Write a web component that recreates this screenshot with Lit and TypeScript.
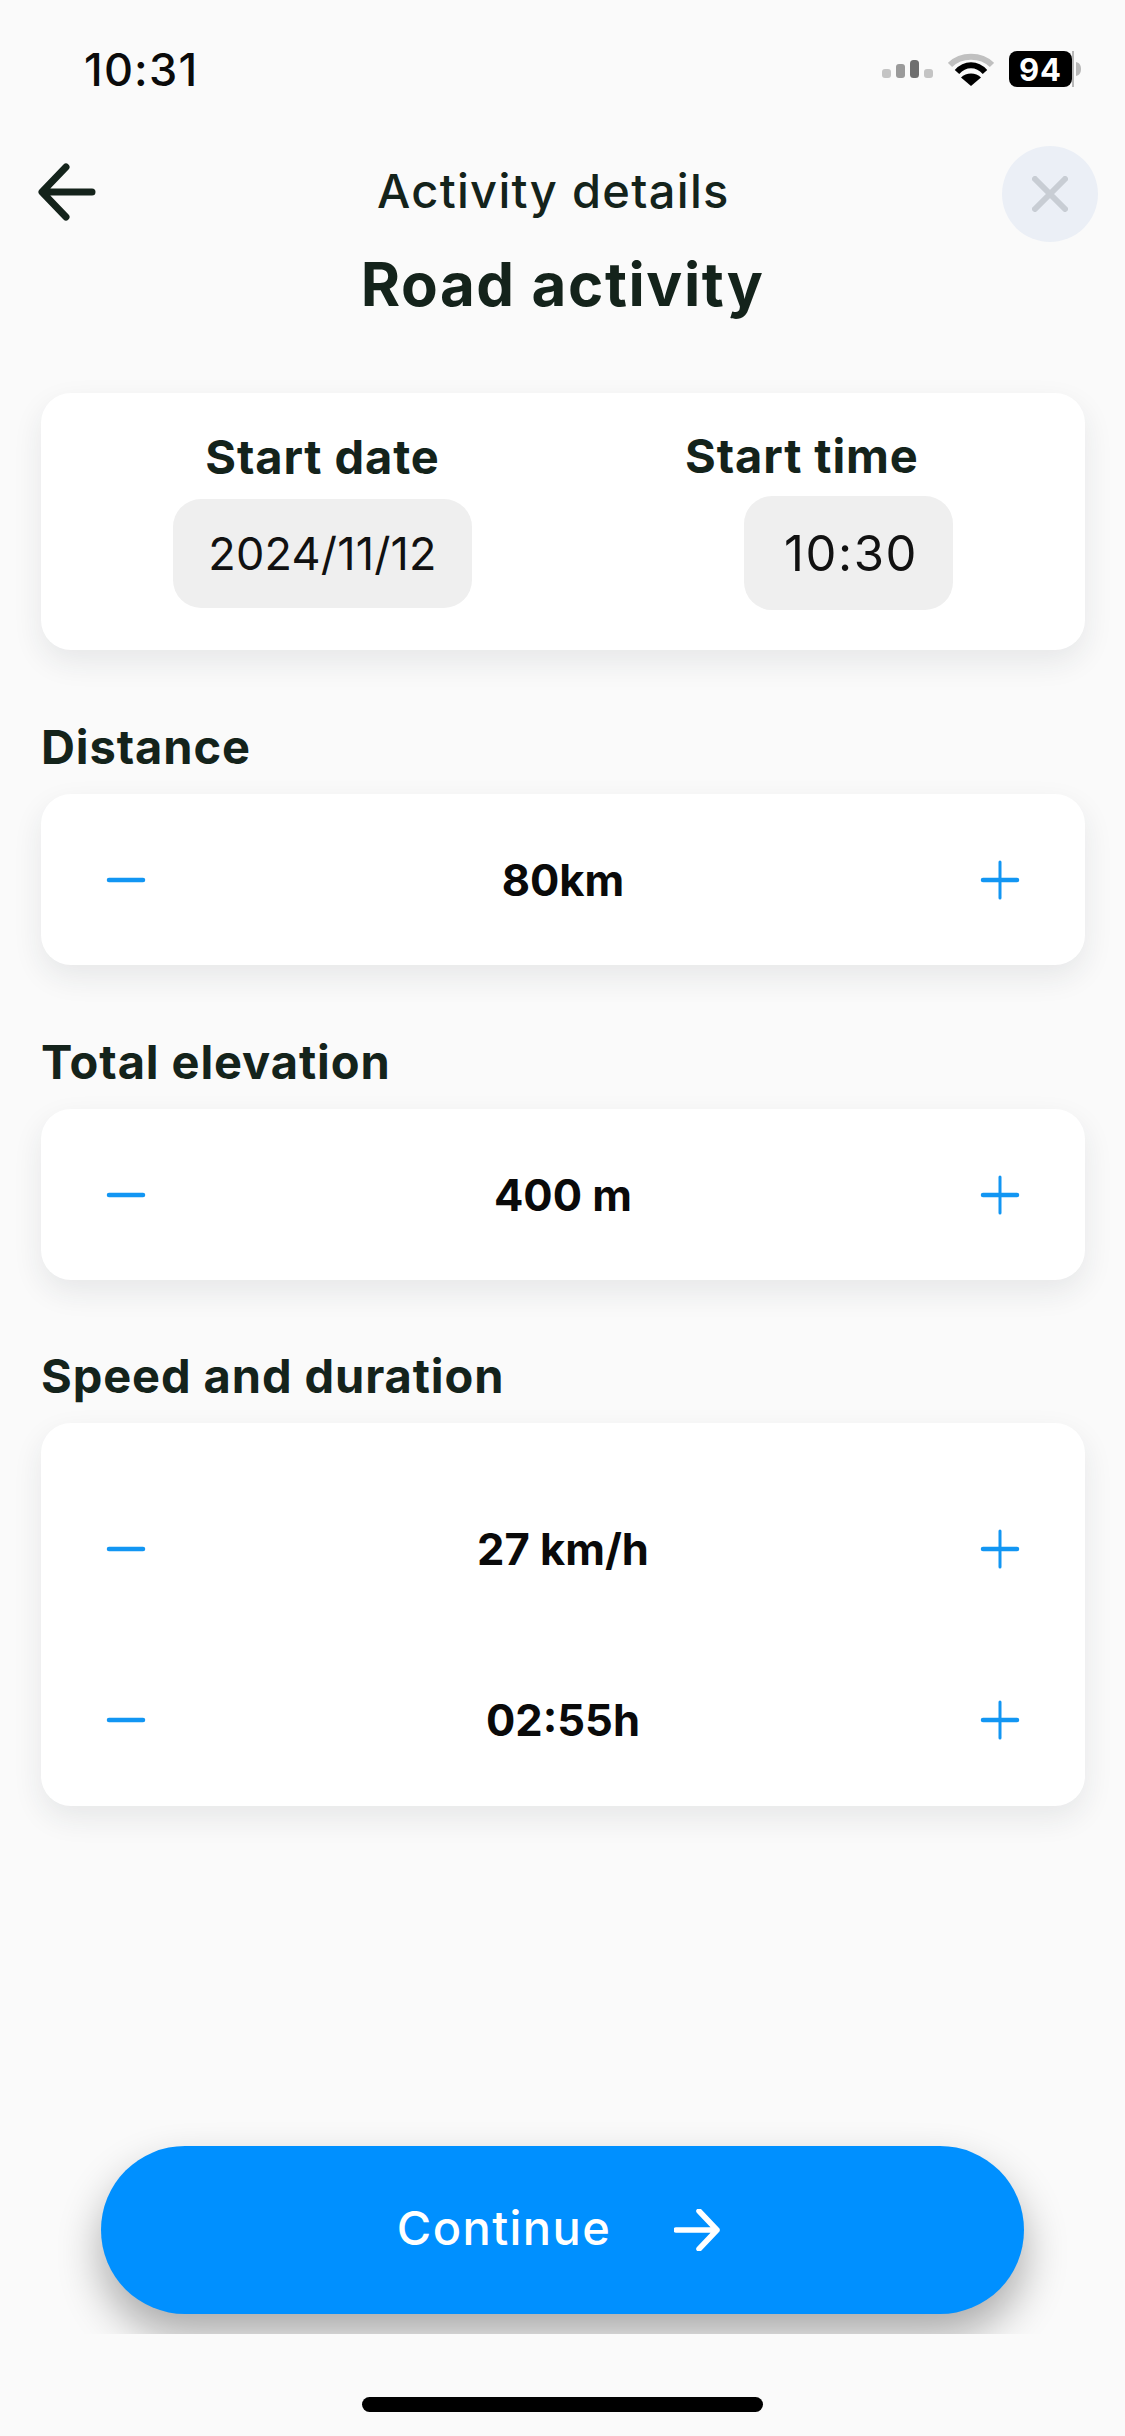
import { LitElement, html, css } from "lit";
import { customElement } from "lit/decorators.js";

const minus = html`<svg class="ic" viewBox="0 0 38 38"><path d="M2 19H36" stroke="#1296f3" stroke-width="4.5" stroke-linecap="round"/></svg>`;
const plus = html`<svg class="ic" viewBox="0 0 38 38"><path d="M2 19H36" stroke="#1296f3" stroke-width="4.5" stroke-linecap="round"/><path d="M19 1V37" stroke="#1296f3" stroke-width="3" stroke-linecap="round"/></svg>`;

@customElement("app-root")
export class AppRoot extends LitElement {
  static styles = css`
    :host { display: block; width: 1125px; height: 2436px; background: #fafafa; color: #14231b; font-family: Inter, "Liberation Sans", sans-serif; overflow: hidden; }
    .page { display: flex; flex-direction: column; height: 2436px; }
    .status { height: 138px; display: flex; align-items: center; justify-content: space-between; padding: 0 43px 0 84px; box-sizing: border-box; flex: none; }
    .time { font-size: 45px; font-weight: 500; color: #0b0b0b; letter-spacing: 1.2px; }
    .status-icons { display: flex; align-items: center; gap: 15px; }
    .battery { display: flex; align-items: center; }
    .batt-body { width: 63px; height: 36px; border-radius: 8px; background: #000; color: #fff; font-size: 31px; font-weight: 700; display: flex; align-items: center; justify-content: center; letter-spacing: 1px; }
    .batt-cap { width: 10px; height: 36px; display: block; }
    .nav { height: 108px; display: flex; align-items: center; justify-content: space-between; padding: 0 26px 0 36px; position: relative; flex: none; }
    .nav-title { position: absolute; left: 377px; top: 50%; transform: translateY(-50%); margin-top: -2px; font-size: 47px; font-weight: 500; letter-spacing: 1.3px; white-space: nowrap; }
    .back { width: 60px; height: 60px; display: block; }
    .close { width: 96px; height: 96px; border-radius: 50%; background: #ebeff6; display: flex; align-items: center; justify-content: center; margin-top: 4px; margin-right: 1px; }
    .close svg { width: 36px; height: 36px; display: block; }
    .title { height: 78px; line-height: 76px; margin: 0; text-align: center; font-size: 60px; font-weight: 700; flex: none; letter-spacing: 1.6px; }
    .main { padding: 69px 40px 0 41px; display: flex; flex-direction: column; flex: none; }
    .card { background: #fff; border-radius: 30px; box-shadow: 0 12px 30px rgba(30, 40, 50, 0.09); }
    .dates { height: 257px; display: flex; }
    .col { display: flex; flex-direction: column; }
    .col.date { margin-left: 132px; width: 299px; align-items: center; padding-top: 35px; }
    .col.clock { margin-left: 213px; width: 268px; align-items: flex-start; padding-top: 34px; }
    .col-label { font-size: 47px; font-weight: 700; line-height: 58px; letter-spacing: 0.9px; white-space: nowrap; }
    .pill { background: #efefef; border-radius: 28px; display: flex; align-items: center; justify-content: center; color: #111; }
    .pill.d { width: 299px; height: 109px; margin-top: 13px; font-size: 45px; letter-spacing: 0.2px; }
    .pill.t { width: 209px; height: 114px; margin-top: 11px; margin-left: 59px; padding-left: 5px; box-sizing: border-box; font-size: 49px; letter-spacing: 1.6px; }
    .label { height: 60px; line-height: 57px; margin-top: 68px; margin-bottom: 16px; font-size: 47px; font-weight: 700; letter-spacing: 0.9px; }
    .label.last { margin-top: 67px; }
    .stepper { height: 171px; display: flex; align-items: center; justify-content: space-between; padding: 0 66px; }
    .multi { padding-top: 40px; height: 383px; box-sizing: border-box; display: flex; flex-direction: column; }
    .multi .stepper { flex: none; }
    .value { font-size: 43.5px; font-weight: 700; color: #0a0a0a; }
    .ic { width: 38px; height: 38px; display: block; overflow: visible; }
    .spacer { flex: 1; }
    .footer { flex: none; height: 300px; overflow: hidden; padding: 112px 101px 0 101px; box-sizing: border-box; display: flex; align-items: flex-start; }
    .cta { flex: 1; height: 168px; border-radius: 84px; background: #0090ff; color: #fff; display: flex; align-items: center; justify-content: center; gap: 63px; font-size: 47px; font-weight: 500; box-shadow: 0 22px 44px rgba(0,0,0,0.32); letter-spacing: 1.4px; padding: 0 8px 6px 0; box-sizing: border-box; }
    .cta svg { width: 46px; height: 42px; display: block; margin-top: 6px; }
    .bottom { flex: none; height: 102px; display: flex; justify-content: center; padding-top: 63px; box-sizing: border-box; }
    .home { width: 401px; height: 15px; border-radius: 8px; background: #000; }
  `;

  stepper(v: string) {
    return html`<div class="stepper">${minus}<span class="value">${v}</span>${plus}</div>`;
  }

  render() {
    return html`<div class="page">
      <div class="status">
        <span class="time">10:31</span>
        <div class="status-icons">
          <svg width="51" height="18" viewBox="0 0 51 18">
            <rect x="0" y="9" width="9" height="9" rx="3" fill="#c4c4c4"/>
            <rect x="14" y="4" width="9" height="14" rx="3" fill="#9a9a9a"/>
            <rect x="28" y="0" width="9" height="18" rx="3.5" fill="#6e6e6e"/>
            <rect x="42" y="9" width="9" height="9" rx="3" fill="#c4c4c4"/>
          </svg>
          <svg width="46" height="34" viewBox="0 0 46 34">
            <path d="M2 13C13 2 33 2 44 13" fill="none" stroke="#c0c0c0" stroke-width="6"/>
            <path d="M9 20C17 11 29 11 37 20" fill="none" stroke="#000" stroke-width="6"/>
            <path d="M23 34L13 25.5C18 20 28 20 33 25.5Z" fill="#000"/>
          </svg>
          <div class="battery">
            <div class="batt-body">94</div>
            <svg class="batt-cap" viewBox="0 0 10 36"><path d="M0 0H2V36H0Z" fill="#b8b8b8"/><path d="M4 11C8 12 9 15 9 18C9 21 8 24 4 25Z" fill="#b8b8b8"/></svg>
          </div>
        </div>
      </div>
      <div class="nav">
        <svg class="back" viewBox="0 0 60 60"><path d="M7 30H56M30 5L6 30L30 55" fill="none" stroke="#14231b" stroke-width="7" stroke-linecap="round" stroke-linejoin="round"/></svg>
        <span class="nav-title">Activity details</span>
        <div class="close"><svg viewBox="0 0 36 36"><path d="M3 3L33 33M33 3L3 33" stroke="#c8cdd4" stroke-width="6" stroke-linecap="round"/></svg></div>
      </div>
      <h1 class="title">Road activity</h1>
      <div class="main">
        <div class="card dates">
          <div class="col date"><span class="col-label">Start date</span><div class="pill d">2024/11/12</div></div>
          <div class="col clock"><span class="col-label">Start time</span><div class="pill t">10:30</div></div>
        </div>
        <div class="label">Distance</div>
        <div class="card">${this.stepper("80km")}</div>
        <div class="label">Total elevation</div>
        <div class="card">${this.stepper("400 m")}</div>
        <div class="label last">Speed and duration</div>
        <div class="card multi">${this.stepper("27 km/h")}${this.stepper("02:55h")}</div>
      </div>
      <div class="spacer"></div>
      <div class="footer">
        <div class="cta"><span>Continue</span><svg viewBox="0 0 46 42"><path d="M2 21H43M25 2L43 21L25 40" fill="none" stroke="#fff" stroke-width="5.5" stroke-linecap="round" stroke-linejoin="round"/></svg></div>
      </div>
      <div class="bottom"><div class="home"></div></div>
    </div>`;
  }
}
